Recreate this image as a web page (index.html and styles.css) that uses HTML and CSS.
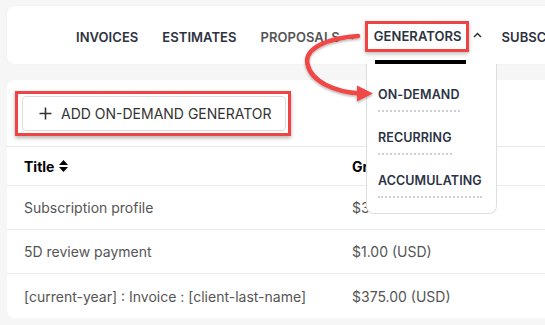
FILE: index.html
```html
<!DOCTYPE html>
<html>
<head>
<meta charset="utf-8">
<link rel="stylesheet" href="styles.css">
</head>
<body>
<div class="page">
  <nav class="topbar">
    <span class="nav-item">INVOICES</span>
    <span class="nav-item">ESTIMATES</span>
    <span class="nav-item muted">PROPOSALS
      <svg class="chev" width="9" height="6" viewBox="0 0 9 6"><polyline points="1,1 4.5,4.5 8,1" fill="none" stroke="#555" stroke-width="1.5"/></svg>
    </span>
    <span class="nav-item active"><span class="hl">GENERATORS</span>
      <svg class="chev up" width="9" height="6" viewBox="0 0 9 6"><polyline points="1,5 4.5,1.5 8,5" fill="none" stroke="#333" stroke-width="1.5"/></svg>
    </span>
    <span class="nav-item">SUBSCRIPTIONS</span>
  </nav>

  <section class="card">
    <div class="toolbar">
      <div class="btn-hl">
        <button class="btn">
          <svg width="13" height="13" viewBox="0 0 13 13"><path d="M6.5 0.5V12.5M0.5 6.5H12.5" stroke="#333" stroke-width="1.6"/></svg>
          <span>ADD ON-DEMAND GENERATOR</span>
        </button>
      </div>
    </div>
    <div class="table">
      <div class="row head">
        <div class="cell">Title
          <svg class="sort" width="9" height="12" viewBox="0 0 9 12"><polygon points="4.5,0 9,5 0,5" fill="#000"/><polygon points="0,7 9,7 4.5,12" fill="#000"/></svg>
        </div>
        <div class="cell">Gross</div>
      </div>
      <div class="row">
        <div class="cell">Subscription profile</div>
        <div class="cell">$3.00 (USD)</div>
      </div>
      <div class="row">
        <div class="cell">5D review payment</div>
        <div class="cell">$1.00 (USD)</div>
      </div>
      <div class="row last">
        <div class="cell">[current-year] : Invoice : [client-last-name]</div>
        <div class="cell">$375.00 (USD)</div>
      </div>
    </div>
  </section>
</div>

<div class="dropdown">
  <a class="dd-item">ON-DEMAND</a>
  <a class="dd-item">RECURRING</a>
  <a class="dd-item">ACCUMULATING</a>
</div>
<div class="active-bar"></div>

<svg class="arrow" width="545" height="325" viewBox="0 0 545 325">
  <defs>
    <filter id="sh" x="-10%" y="-10%" width="130%" height="130%">
      <feDropShadow dx="0" dy="1.5" stdDeviation="1" flood-color="#000" flood-opacity="0.3"/>
    </filter>
  </defs>
  <g filter="url(#sh)">
    <path d="M358 36 C 328 38, 304 48, 307.5 64 C 311 82, 336 92, 360 93.5" fill="none" stroke="#f04646" stroke-width="4.5" stroke-linecap="round"/>
    <polygon points="357,85.5 373,93.5 357,101.5" fill="#f04646"/>
  </g>
</svg>
</body>
</html>
```

FILE: styles.css
```css
* { box-sizing: border-box; }
html, body { margin: 0; padding: 0; }
body {
  width: 545px;
  height: 325px;
  overflow: hidden;
  background: #f6f6f6;
  font-family: Inter, "Noto Sans", sans-serif;
  position: relative;
}
.page {
  padding: 6px 0 0 7px;
  width: 560px;
}
.topbar {
  height: 58px;
  background: #fff;
  border-radius: 8px;
  display: flex;
  align-items: center;
  padding: 3px 0 0 69px;
  white-space: nowrap;
  box-shadow: 0 0 2px rgba(0,0,0,0.04);
}
.nav-item {
  font-size: 13px;
  font-weight: 600;
  color: #2e3240;
  margin-right: 24px;
  display: inline-flex;
  align-items: center;
  letter-spacing: 0.05px;
}
.nav-item.muted { color: #555; margin-right: 8px; }
.nav-item.muted .chev { margin-left: 8px; }
.nav-item.active { margin-right: 20px; }
.hl {
  border: 3px solid #ef4444;
  padding: 4px 4px 5px 6px;
  box-shadow: 0 2px 4px rgba(0,0,0,0.25);
}
.chev.up { margin-left: 4px; margin-top: -4px; }
.card {
  margin-top: 16px;
  height: 238px;
  background: #fff;
  border-radius: 8px;
}
.toolbar {
  padding: 11px 0 10px 8px;
  border-bottom: 1px solid #e8e8e8;
}
.btn-hl {
  display: inline-block;
  border: 3px solid #ef4444;
  padding: 2px 2px 2px 4px;
  box-shadow: 0 2px 4px rgba(0,0,0,0.3);
}
.btn {
  height: 35px;
  width: 264px;
  display: flex;
  align-items: center;
  gap: 9px;
  padding: 0 0 0 16px;
  background: #fff;
  border: 1px solid #dcdcdc;
  border-radius: 4px;
  font-family: Inter, "Noto Sans", sans-serif;
  font-size: 14px;
  color: #333;
}
.table { padding-left: 17px; }
.row {
  display: grid;
  grid-template-columns: 328px 1fr;
  height: 44px;
  align-items: center;
  border-bottom: 1px solid #ececec;
  margin-left: -17px;
  padding-left: 17px;
  font-size: 14px;
  color: #555;
}
.row.head {
  height: 39px;
  color: #000;
  font-weight: 700;
}
.row.last { border-bottom: none; }
.cell { display: flex; align-items: center; }
.sort { margin-left: 5px; }
.dropdown {
  position: absolute;
  left: 366px;
  top: 64px;
  width: 131px;
  height: 150px;
  background: #fff;
  border: 1px solid #dedede;
  border-top: none;
  border-radius: 0 0 8px 8px;
  padding: 23px 0 0 11px;
  display: flex;
  flex-direction: column;
  align-items: flex-start;
  gap: 18px;
}
.dd-item {
  font-size: 12.5px;
  font-weight: 600;
  color: #2b3344;
  padding-bottom: 7px;
  border-bottom: 2px dotted #cfcfcf;
  line-height: 16px;
  letter-spacing: 0.1px;
}
.active-bar {
  position: absolute;
  left: 375px;
  top: 60px;
  width: 91px;
  height: 4px;
  background: #000;
}
.arrow {
  position: absolute;
  left: 0;
  top: 0;
  pointer-events: none;
}
```
